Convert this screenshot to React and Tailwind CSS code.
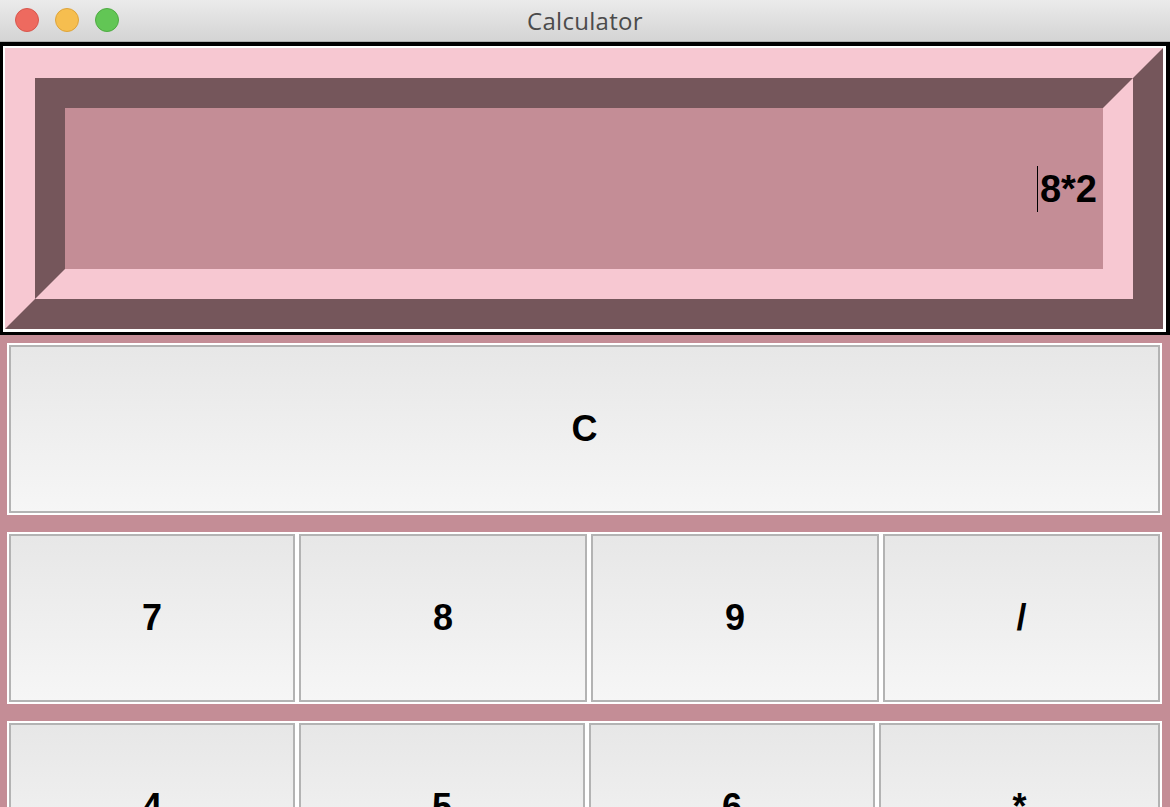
const PINK = 'border-[#f7c8d2]';

function Key({ label }) {
  return (
    <button
      type="button"
      className="h-[172px] border-2 border-white p-0"
    >
      <div className="h-full w-full border-2 border-[#b3b3b3] bg-gradient-to-b from-[#e7e7e7] to-[#f6f6f6] flex items-center justify-center">
        <span className="text-[36px] font-bold text-black leading-none">{label}</span>
      </div>
    </button>
  );
}

const rows = [
  { cols: 'grid-cols-[290px_292px_292px_1fr]', keys: ['7', '8', '9', '/'] },
  { cols: 'grid-cols-[290px_290px_290px_1fr]', keys: ['4', '5', '6', '*'] },
  { cols: 'grid-cols-[290px_290px_290px_1fr]', keys: ['1', '2', '3', '-'] },
  { cols: 'grid-cols-[290px_290px_290px_1fr]', keys: ['0', '.', '=', '+'] },
];

export default function App() {
  return (
    <div
      className="w-[1170px] h-[807px] overflow-hidden bg-[#c48d96] flex flex-col"
      style={{ fontFamily: '"Liberation Sans", Arial, sans-serif' }}
    >
      {/* window title bar */}
      <div className="h-[42px] shrink-0 relative flex items-center justify-center bg-gradient-to-b from-[#ebebeb] to-[#d4d4d4] border-b border-[#aeaeae]">
        <div className="absolute left-[15px] top-[8px] flex gap-4">
          <span className="w-6 h-6 rounded-full bg-[#ee6a5f] border border-[#d8574d]" />
          <span className="w-6 h-6 rounded-full bg-[#f6be4f] border border-[#dea43a]" />
          <span className="w-6 h-6 rounded-full bg-[#62c655] border border-[#4fab43]" />
        </div>
        <span
          className="text-[24px] text-[#4b4b4b] tracking-[0.3px]"
          style={{ fontFamily: '"Open Sans", "Noto Sans", sans-serif' }}
        >
          Calculator
        </span>
      </div>

      {/* display */}
      <div className="shrink-0 border-black border-t-4 border-l-[3px] border-r-4 border-b-[3px]">
        <div className="border-white border-t-2 border-l-2 border-r-[3px] border-b-[3px]">
          <div className={`border-[30px] ${PINK} border-r-[#75565b] border-b-[#75565b]`}>
            <div className="border-[30px] border-[#75565b] border-r-[#f7c8d2] border-b-[#f7c8d2]">
              <div className="h-[161px] bg-[#c48d96] flex items-center justify-end pr-[6px]">
                <span className="w-px h-[46px] bg-black mr-[2px]" />
                <span className="text-[38px] font-bold text-black leading-none">8*2</span>
              </div>
            </div>
          </div>
        </div>
      </div>

      {/* keypad */}
      <div className="flex flex-col gap-[17px] pl-[7px] pr-[8px] pt-[8px]">
        <Key label="C" />
        {rows.map((r, i) => (
          <div key={i} className={`grid ${r.cols}`}>
            {r.keys.map((k) => (
              <Key key={k} label={k} />
            ))}
          </div>
        ))}
      </div>
    </div>
  );
}
